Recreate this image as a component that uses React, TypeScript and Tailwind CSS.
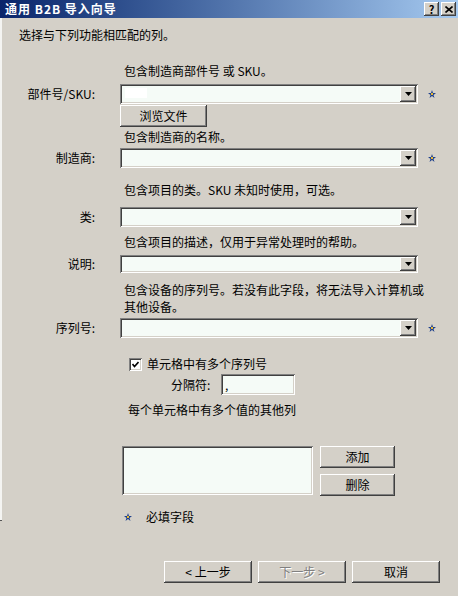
const raised =
  "bg-[#d4d0c8] shadow-[inset_-1px_-1px_0_#404040,inset_1px_1px_0_#ffffff,inset_-2px_-2px_0_#808080,inset_2px_2px_0_#d4d0c8]";
const sunken =
  "bg-[#f5fbf7] shadow-[inset_1px_1px_0_#808080,inset_-1px_-1px_0_#ffffff,inset_2px_2px_0_#404040,inset_-2px_-2px_0_#d4d0c8]";

function Star() {
  return (
    <svg width="8" height="8" viewBox="0 0 8 8" className="block">
      <polygon points="4,0 5,3 8,3 5.5,5 6.5,8 4,6 1.5,8 2.5,5 0,3 3,3" fill="#1c3f8c" />
      <rect x="3" y="3" width="2" height="2" fill="#e8b830" />
    </svg>
  );
}

function Combo({ h = "h-[20px]", filled = false }: { h?: string; filled?: boolean }) {
  return (
    <div className={`${sunken} ${h} w-[298px] flex items-center justify-between p-[2px]`}>
      <div className="h-full w-[30px] pl-[3px] pt-[2px]">
        {filled ? <div className="h-[10px] w-[22px] bg-white" /> : null}
      </div>
      <div className={`${raised} h-full w-[16px] flex items-center justify-center`}>
        <svg width="7" height="4" viewBox="0 0 7 4">
          <polygon points="0,0 7,0 3.5,4" fill="#000" />
        </svg>
      </div>
    </div>
  );
}

function Row({ label, star, h, filled }: { label: string; star?: boolean; h?: string; filled?: boolean }) {
  return (
    <div className="flex items-center">
      <div className="w-[97px] text-right pr-[2px]">{label}</div>
      <div className="ml-[23px]">
        <Combo h={h} filled={filled} />
      </div>
      <div className="ml-[10px] w-[8px]">{star ? <Star /> : null}</div>
    </div>
  );
}

function Desc({ children, mt }: { children: React.ReactNode; mt: string }) {
  return <div className={`${mt} pl-[124px] leading-[14px]`}>{children}</div>;
}

function Btn({ children, className = "", disabled = false }: { children: React.ReactNode; className?: string; disabled?: boolean }) {
  return (
    <div
      className={`${raised} flex items-center justify-center ${className} ${
        disabled ? "text-[#808080] [text-shadow:1px_1px_0_#ffffff]" : "text-black"
      }`}
    >
      {children}
    </div>
  );
}

export default function App() {
  return (
    <div
      className="w-[458px] h-[596px] bg-[#d4d0c8] text-[12px] text-black overflow-hidden"
      style={{ fontFamily: '"Noto Sans CJK SC", "Noto Sans", sans-serif' }}
    >
      {/* title bar */}
      <div className="h-[18px] flex items-center justify-between bg-gradient-to-r from-[#0a246a] to-[#a6caf0] pl-[5px] pr-[2px]">
        <span className="text-white font-bold leading-none tracking-[1px]">通用 B2B 导入向导</span>
        <div className="flex gap-[2px]">
          <Btn className="w-[15px] h-[14px] font-bold text-[11px] leading-none">?</Btn>
          <Btn className="w-[15px] h-[14px]">
            <svg width="8" height="7" viewBox="0 0 8 7">
              <path d="M0.5 0.5 L7.5 6.5 M7.5 0.5 L0.5 6.5" stroke="#000" strokeWidth="1.6" />
            </svg>
          </Btn>
        </div>
      </div>

      <div className="flex">
        <div className="w-[2px] h-[503px] bg-[#f4f4f2] border-b border-[#555]" />
        <div className="flex flex-col -ml-[2px] w-full">
          <div className="mt-[10px] pl-[19px] leading-[14px]">选择与下列功能相匹配的列。</div>

          <Desc mt="mt-[22px]">包含制造商部件号 或 SKU。</Desc>
          <div className="mt-[6px]">
            <Row label="部件号/SKU:" star filled />
          </div>
          <div className="mt-[1px] pl-[120px]">
            <Btn className="w-[87px] h-[22px]">浏览文件</Btn>
          </div>

          <Desc mt="mt-[3px]">包含制造商的名称。</Desc>
          <div className="mt-[4px]">
            <Row label="制造商:" star />
          </div>

          <Desc mt="mt-[15px]">包含项目的类。SKU 未知时使用，可选。</Desc>
          <div className="mt-[10px]">
            <Row label="类:" />
          </div>

          <Desc mt="mt-[8px]">包含项目的描述，仅用于异常处理时的帮助。</Desc>
          <div className="mt-[6px]">
            <Row label="说明:" h="h-[18px]" />
          </div>

          <div className="mt-[8px] pl-[124px] leading-[17px] w-[440px]">
            包含设备的序列号。若没有此字段，将无法导入计算机或
            <br />
            其他设备。
          </div>
          <div className="mt-[3px]">
            <Row label="序列号:" star />
          </div>

          <div className="mt-[18px] pl-[129px] flex items-center h-[16px]">
            <div className={`${sunken} bg-white w-[13px] h-[13px] flex items-center justify-center`}>
              <svg width="7" height="7" viewBox="0 0 7 7">
                <path d="M0.5 3 L2.5 5.5 L6.5 1" stroke="#000" strokeWidth="1.6" fill="none" />
              </svg>
            </div>
            <span className="ml-[5px]">单元格中有多个序列号</span>
          </div>

          <div className="mt-[2px] flex items-center pl-[171px]">
            <span className="w-[50px]">分隔符:</span>
            <div className={`${sunken} w-[74px] h-[21px] pl-[4px] leading-[21px]`}>,</div>
          </div>

          <div className="mt-[8px] pl-[128px] leading-[14px]">每个单元格中有多个值的其他列</div>

          <div className="mt-[29px] pl-[122px] flex gap-[7px]">
            <div className={`${sunken} w-[191px] h-[49px]`} />
            <div className="flex flex-col gap-[6px]">
              <Btn className="w-[75px] h-[22px]">添加</Btn>
              <Btn className="w-[75px] h-[22px]">删除</Btn>
            </div>
          </div>

          <div className="mt-[14px] pl-[124px] flex items-center">
            <Star />
            <span className="ml-[14px] leading-[14px]">必填字段</span>
          </div>
        </div>
      </div>

      <div className="mt-[37px] flex justify-end gap-[6px] pr-[18px]">
        <Btn className="w-[88px] h-[22px]">&lt; 上一步</Btn>
        <Btn className="w-[88px] h-[22px]" disabled>
          下一步 &gt;
        </Btn>
        <Btn className="w-[88px] h-[22px]">取消</Btn>
      </div>
    </div>
  );
}
